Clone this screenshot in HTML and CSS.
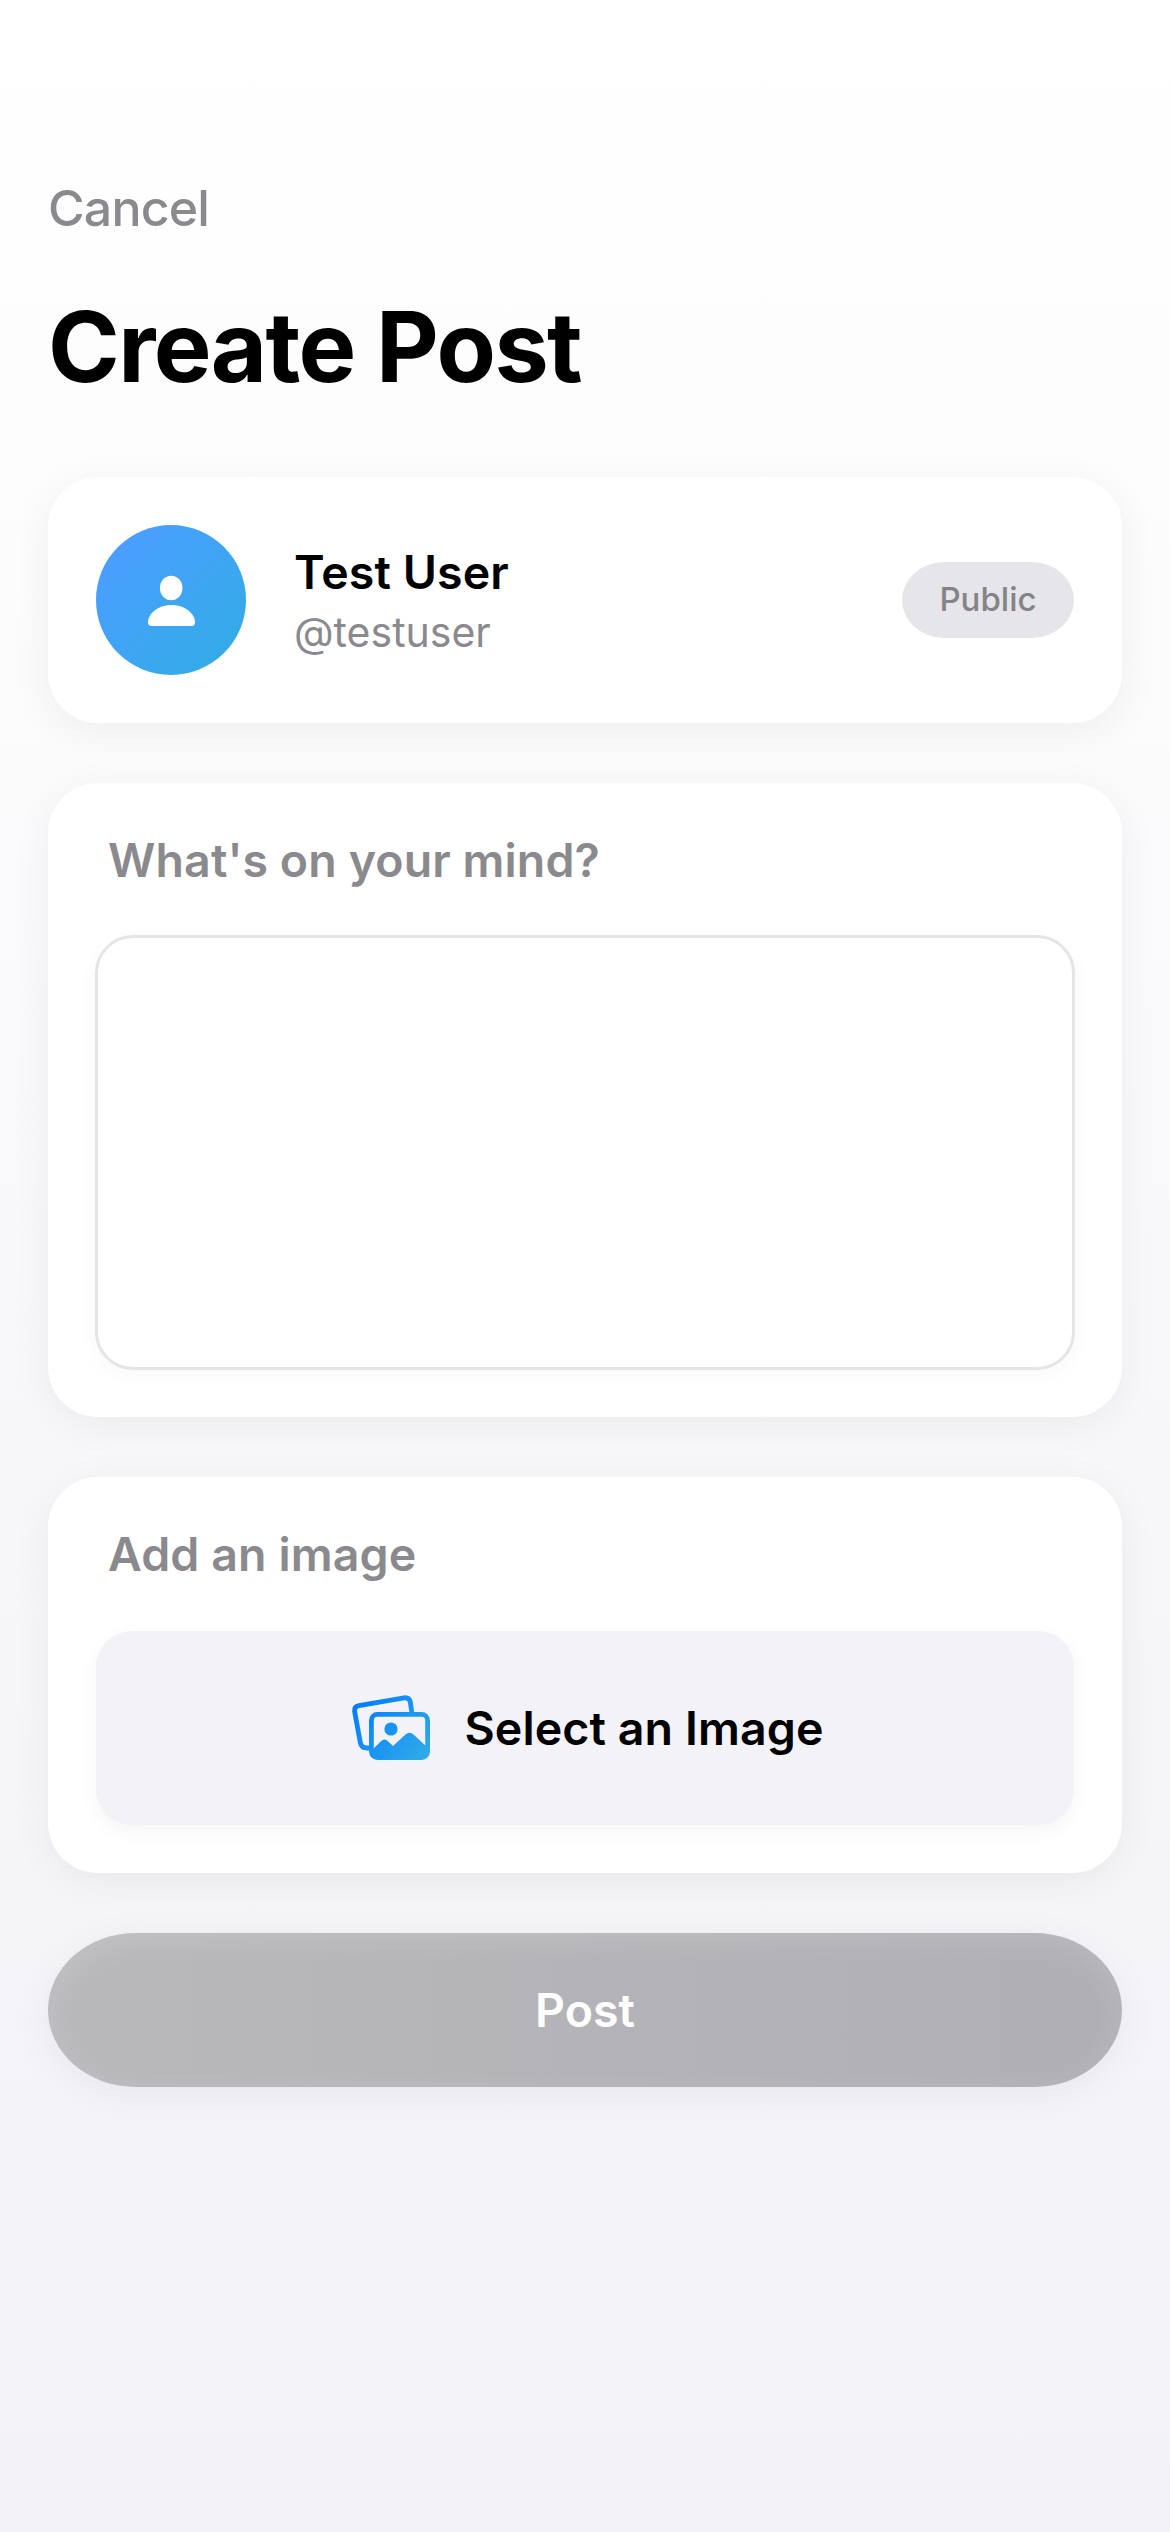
FILE: index.html
```html
<!DOCTYPE html>
<html lang="en">
<head>
<meta charset="utf-8">
<title>Create Post</title>
<link rel="stylesheet" href="styles.css">
</head>
<body>
<main class="screen">
  <button class="cancel">Cancel</button>
  <h1 class="title">Create Post</h1>

  <section class="card author">
    <div class="avatar">
      <svg class="person" viewBox="0 0 150 150" aria-hidden="true">
        <ellipse cx="75.2" cy="63" rx="11.3" ry="12.2"/>
        <path d="M55.5 101C53 101 52 99.6 52 97.3C52 89.5 61 80 75.5 80C90 80 99 89.5 99 97.3C99 99.6 98 101 95.5 101Z"/>
      </svg>
    </div>
    <div class="identity">
      <span class="name">Test User</span>
      <span class="handle">@testuser</span>
    </div>
    <span class="badge">Public</span>
  </section>

  <section class="card compose">
    <h2 class="label">What's on your mind?</h2>
    <div class="editor" contenteditable="true"></div>
  </section>

  <section class="card media">
    <h2 class="label">Add an image</h2>
    <button class="picker">
      <svg class="photos" viewBox="12 14 82 70" aria-hidden="true">
        <defs>
          <linearGradient id="blue" gradientUnits="userSpaceOnUse" x1="16" y1="19" x2="88" y2="82">
            <stop offset="0" stop-color="#007aff"/>
            <stop offset="1" stop-color="#32ade6"/>
          </linearGradient>
        </defs>
        <path class="frame" d="M31 69H28Q22.300 69 21.300 63.500L15.600 32.500Q15 27.500 20 26.700L65 18.800Q70.300 18.200 71.300 23L72.900 34"/>
        <rect class="frame" x="32.4" y="35.4" width="56.2" height="43.2" rx="6"/>
        <circle class="solid" cx="52" cy="50" r="6.6"/>
        <path class="solid" d="M33 71L42 62.200Q45.500 59 49 62.200L54 67L66.500 55.500Q70.500 52.200 74.500 55.500L88 68V75Q88 79 84 79H37Q33 79 33 75Z"/>
      </svg>
      <span class="picker-text">Select an Image</span>
    </button>
  </section>

  <button class="post">Post</button>
</main>
</body>
</html>
```
FILE: styles.css
```css
* { box-sizing: border-box; }

body {
  margin: 0;
  font-family: Inter, "Liberation Sans", sans-serif;
  color: #000;
}

button {
  border: 0;
  padding: 0;
  background: none;
  font: inherit;
  color: inherit;
}

h1, h2 { margin: 0; }

.screen {
  display: flex;
  flex-direction: column;
  align-items: stretch;
  height: 2532px;
  padding: 178px 48px 0;
  background: linear-gradient(#fff, #f2f2f7);
}

.cancel {
  align-self: flex-start;
  height: 60px;
  line-height: 60px;
  font-size: 50px;
  font-weight: 450;
  letter-spacing: -0.8px;
  color: #8a8a8e;
}

.title {
  height: 120px;
  margin: 49px 0 70px;
  line-height: 120px;
  font-size: 97px;
  font-weight: 700;
  letter-spacing: -1.6px;
  white-space: nowrap;
}

.card {
  padding: 48px;
  border-radius: 50px;
  background: #fff;
  box-shadow: 0 8px 40px rgba(0, 0, 0, 0.055);
}

.author {
  display: flex;
  align-items: center;
  height: 246px;
}

.avatar {
  width: 150px;
  height: 150px;
  border-radius: 50%;
  background: linear-gradient(135deg, #4a9eff 15%, #34abe8 85%);
}

.person {
  display: block;
  fill: #fff;
}

.identity {
  display: flex;
  flex-direction: column;
  flex: 1;
  margin-left: 48px;
  padding-top: 3px;
}

.name {
  line-height: 60px;
  font-size: 46.5px;
  font-weight: 600;
  letter-spacing: 0.1px;
}

.handle {
  line-height: 60px;
  font-size: 41px;
  color: #8a8a8e;
}

.badge {
  width: 172px;
  height: 76px;
  border-radius: 42px / 38px;
  background: #e5e5ea;
  line-height: 75px;
  text-align: center;
  font-size: 33px;
  font-weight: 500;
  color: #838388;
}

.compose {
  height: 634px;
  margin-top: 60px;
}

.label {
  height: 58px;
  margin: 0 12px 46px;
  line-height: 58px;
  font-size: 46.5px;
  font-weight: 600;
  letter-spacing: 0.1px;
  color: #8a8a8e;
  white-space: nowrap;
}

.editor {
  height: 435px;
  margin: 0 -1px;
  border: 3px solid #e5e5e5;
  border-radius: 38px;
  background: #fff;
  box-shadow: 0 6px 20px rgba(0, 0, 0, 0.03);
}

.media {
  height: 396px;
  margin-top: 60px;
}

.media .label { margin-bottom: 48px; }

.picker {
  display: flex;
  align-items: center;
  justify-content: center;
  width: 100%;
  height: 194px;
  padding-left: 5px;
  border-radius: 36px;
  background: #f2f2f7;
  box-shadow: 0 6px 20px rgba(0, 0, 0, 0.045);
}

.photos {
  width: 82px;
  height: 70px;
  margin-right: 31px;
}

.frame {
  fill: none;
  stroke: url(#blue);
  stroke-width: 4.8;
}

.solid { fill: url(#blue); }

.picker-text {
  font-size: 46.5px;
  font-weight: 600;
  letter-spacing: 0.1px;
  white-space: nowrap;
}

.post {
  height: 154px;
  margin-top: 60px;
  border-radius: 88px / 77px;
  background: linear-gradient(90deg, #b9b9bc, #afafb4);
  box-shadow: 0 8px 40px rgba(0, 0, 0, 0.055), inset 0 8px 32px rgba(255, 255, 255, 0.14);
  font-size: 46.5px;
  font-weight: 600;
  color: #fff;
}
```
